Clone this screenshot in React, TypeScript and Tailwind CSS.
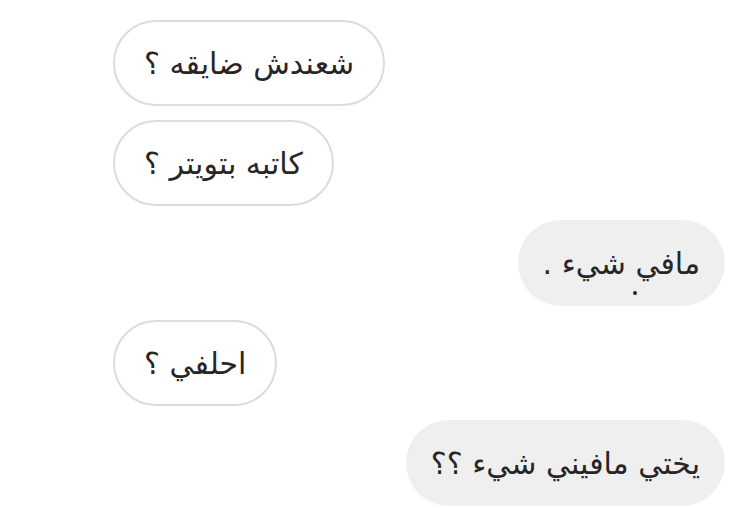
const messages = [
  { text: "شعندش ضايقه ؟", mine: false },
  { text: "كاتبه بتويتر ؟", mine: false },
  { text: "مافي شيء .", mine: true, dot: true },
  { text: "احلفي ؟", mine: false },
  { text: "يختي مافيني شيء ؟؟", mine: true },
]

export default function App() {
  return (
    <div className="flex h-[508px] w-[750px] flex-col gap-[14px] bg-white pt-[20px] font-['DejaVu_Sans',sans-serif] text-[#262626]">
      {messages.map((m, i) =>
        m.mine ? (
          <div
            key={i}
            dir="rtl"
            className="relative mr-[25px] flex h-[86px] items-center self-end rounded-full bg-[#efefef] px-[25px] text-[30px]"
          >
            {m.text}
            {m.dot && (
              <span className="absolute right-[88px] top-[71px] size-[4px] rounded-full bg-[#262626]" />
            )}
          </div>
        ) : (
          <div
            key={i}
            dir="rtl"
            className="ml-[113px] flex h-[86px] items-center self-start rounded-full border-2 border-[#dbdbdb] bg-white px-[29px] text-[30px]"
          >
            {m.text}
          </div>
        )
      )}
    </div>
  )
}
